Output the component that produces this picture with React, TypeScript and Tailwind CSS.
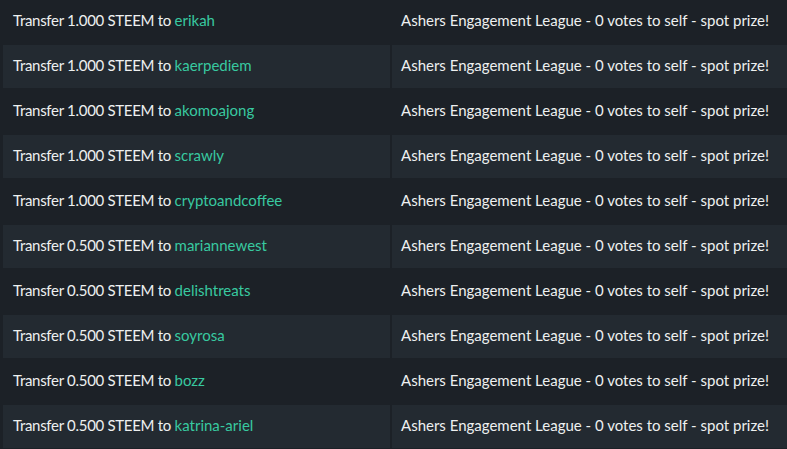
import React from "react";

const rows: [string, string][] = [
  ["1.000", "erikah"],
  ["1.000", "kaerpediem"],
  ["1.000", "akomoajong"],
  ["1.000", "scrawly"],
  ["1.000", "cryptoandcoffee"],
  ["0.500", "mariannewest"],
  ["0.500", "delishtreats"],
  ["0.500", "soyrosa"],
  ["0.500", "bozz"],
  ["0.500", "katrina-ariel"],
];

export default function App() {
  return (
    <div
      className="w-[787px] h-[449px] overflow-hidden bg-[#1c2127] text-[#eef0f0] text-[15px]"
      style={{ fontFamily: "Lato, 'Open Sans', sans-serif" }}
    >
      <div className="grid grid-cols-[387px_1fr] gap-[2px] pl-[3px]">
        {rows.map(([amt, name], i) => {
          const bg = i % 2 === 1 ? "bg-[#232a31]" : "bg-[#1c2127]";
          return (
            <React.Fragment key={i}>
              <div className={`${bg} h-[43px] flex items-center pl-[10px] pb-[2px]`}>
                <span>
                  <span className="tracking-[-0.3px]">Transfer {amt} STEEM to </span>
                  <span className="text-[#38c9a0]">{name}</span>
                </span>
              </div>
              <div className={`${bg} h-[43px] flex items-center pl-[9px] pb-[2px]`}>
                Ashers Engagement League - 0 votes to self - spot prize!
              </div>
            </React.Fragment>
          );
        })}
      </div>
    </div>
  );
}
